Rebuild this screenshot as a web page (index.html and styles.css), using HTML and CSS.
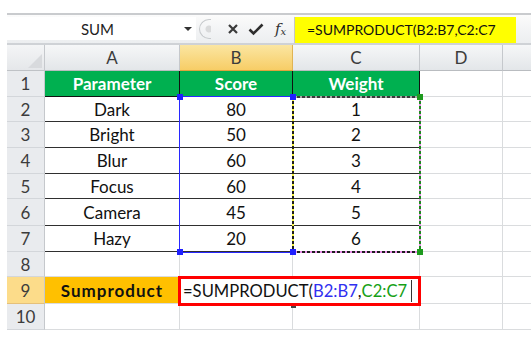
FILE: index.html
```html
<!DOCTYPE html>
<html>
<head>
<meta charset="utf-8">
<link rel="stylesheet" href="styles.css">
</head>
<body>
<div class="app">
  <div class="fbar">
    <div class="namebox"><span class="nm">SUM</span><span class="dd"></span></div>
    <div class="grip"></div>
    <div class="btns">
      <svg class="ico" width="14" height="14" viewBox="0 0 14 14"><path d="M3 3 L11 11 M11 3 L3 11" stroke="#3a3a3a" stroke-width="2.2" fill="none"/></svg>
      <svg class="ico" width="16" height="14" viewBox="0 0 16 14"><path d="M1.5 7.5 L5.5 11.5 L14.5 2.5" stroke="#2e2e2e" stroke-width="2.6" fill="none"/></svg>
      <span class="fx">f<sub>x</sub></span>
    </div>
    <div class="finput">=SUMPRODUCT(B2:B7,C2:C7</div>
  </div>
  <div class="sheet">
    <div class="corner"><svg width="20" height="18" viewBox="0 0 20 18"><path d="M18 2 L18 16 L4 16 Z" fill="#d8dadd"/></svg></div>
    <div class="ch">A</div><div class="ch sel">B</div><div class="ch">C</div><div class="ch">D</div><div class="ch last"></div>

    <div class="rh">1</div><div class="c hd tr">Parameter</div><div class="c hd tr">Score</div><div class="c hd tr">Weight</div><div class="c"></div><div class="c"></div>
    <div class="rh">2</div><div class="c tb">Dark</div><div class="c tb">80</div><div class="c tb">1</div><div class="c"></div><div class="c"></div>
    <div class="rh">3</div><div class="c tb">Bright</div><div class="c tb">50</div><div class="c tb">2</div><div class="c"></div><div class="c"></div>
    <div class="rh">4</div><div class="c tb">Blur</div><div class="c tb">60</div><div class="c tb">3</div><div class="c"></div><div class="c"></div>
    <div class="rh">5</div><div class="c tb">Focus</div><div class="c tb">60</div><div class="c tb">4</div><div class="c"></div><div class="c"></div>
    <div class="rh">6</div><div class="c tb">Camera</div><div class="c tb">45</div><div class="c tb">5</div><div class="c"></div><div class="c"></div>
    <div class="rh">7</div><div class="c tb">Hazy</div><div class="c tb">20</div><div class="c tb">6</div><div class="c"></div><div class="c"></div>
    <div class="rh">8</div><div class="c"></div><div class="c"></div><div class="c"></div><div class="c"></div><div class="c"></div>
    <div class="rh sel">9</div><div class="c orange">Sumproduct</div><div class="c"></div><div class="c"></div><div class="c"></div><div class="c"></div>
    <div class="rh">10</div><div class="c"></div><div class="c"></div><div class="c"></div><div class="c"></div><div class="c"></div>

    <div class="rng-b"></div>
    <div class="rng-c"></div>
    <span class="hdl blue h1"></span><span class="hdl blue h2"></span><span class="hdl blue h3"></span><span class="hdl blue h4"></span>
    <span class="hdl green h5"></span><span class="hdl green h6"></span>
    <div class="editor">=SUMPRODUCT(<span class="rb">B2:B7</span>,<span class="rc">C2:C7</span><span class="caret"></span></div>
    <span class="tick"></span>
  </div>
</div>
</body>
</html>
```
FILE: styles.css
```css
* { box-sizing: border-box; }
html, body { margin: 0; padding: 0; background: #fff; }
body { width: 531px; height: 337px; overflow: hidden; font-family: Lato, "Open Sans", sans-serif; }
.app { padding-top: 13px; padding-left: 7px; }

.fbar {
  display: flex;
  align-items: flex-start;
  height: 32px;
  border-top: 2px solid #c9cbce;
  border-bottom: 2px solid #cfd2d6;
  background: linear-gradient(#fbfbfb, #eceef0);
  padding-top: 2px;
}
.namebox {
  width: 189px;
  height: 23px;
  background: #fff;
  display: flex;
  align-items: center;
  position: relative;
}
.nm { flex: 1; text-align: center; font-size: 15px; color: #222; padding-left: 4px; }
.dd { width: 0; height: 0; border-left: 4px solid transparent; border-right: 4px solid transparent; border-top: 4px solid #333; margin-right: 4px; }
.grip {
  width: 12px; height: 20px; margin-left: 3px; margin-top: 2px;
  border: 1.5px solid #c7cacd; border-right: none; border-radius: 12px 0 0 12px;
  background: radial-gradient(circle at 9px 9px, #d9dadb 3px, transparent 4px);
}
.btns { display: flex; align-items: center; height: 24px; gap: 8px; margin-left: 15px; }
.fx { font-family: "DejaVu Serif", "Liberation Serif", serif; font-style: italic; font-size: 15px; color: #333; margin-left: 3px; width: 19px; }
.fx sub { font-size: 10px; vertical-align: -1px; }
.finput {
  width: 222px;
  height: 26px;
  background: #ffff00;
  border-left: 1px solid #c6c6c6;
  font-size: 14px;
  color: #111;
  padding-left: 12px;
  line-height: 26px;
  white-space: nowrap;
}

.sheet {
  position: relative;
  display: grid;
  grid-template-columns: 38px 135px 113px 127px 83px 35px;
  grid-template-rows: 26px 26px 25px 26px 26px 25px 27px 26px 25px 27px 26px;
}
.corner { background: linear-gradient(#f4f5f6, #e5e7ea); border-right: 1px solid #c5c8cc; border-bottom: 1px solid #bfc2c6; display: flex; align-items: flex-end; justify-content: flex-end; }
.ch {
  background: linear-gradient(#f6f7f8, #e3e6e9);
  border-right: 1px solid #c5c8cc;
  border-bottom: 1px solid #b9bcc0;
  display: flex; align-items: center; justify-content: center;
  font-size: 17px; color: #3c3c3c;
}
.ch.sel { background: linear-gradient(#fbe6a2, #f7cd66); border-right-color: #e0b454; border-bottom-color: #e0a33c; }
.ch.last { border-right: none; }
.rh {
  background: #e9ebee;
  border-right: 1px solid #c5c8cc;
  border-bottom: 1px solid #d3d6da;
  display: flex; align-items: center; justify-content: center;
  font-size: 17px; color: #3c3c3c;
}
.rh.sel { background: #fcdc8a; border-bottom-color: #e5c07a; }
.c {
  border-right: 1px solid #dadcde;
  border-bottom: 1px solid #dadcde;
  display: flex; align-items: center; justify-content: center;
  font-size: 17px; color: #111;
  white-space: nowrap;
}
.c.hd { background: #00b050; color: #fff; font-weight: bold; border-bottom-color: #111; }
.c.tr { border-right-color: #111; }
.c.tb { border-bottom-color: #2f2f2f; }
.c.orange { background: #ffc000; font-weight: bold; color: #111; letter-spacing: 1px; }

.rng-b { position: absolute; left: 172px; top: 51px; width: 115px; height: 157px; border: 1px solid #2828ff; }
.rng-c {
  position: absolute; left: 285px; top: 51px; width: 129px; height: 157px;
  background:
    repeating-linear-gradient(90deg, #3a3a3a 0 3px, #a8a8a8 3px 5px) top / 100% 2px no-repeat,
    repeating-linear-gradient(90deg, #1e1e1e 0 3px, #e98be9 3px 5px) bottom / 100% 2px no-repeat,
    repeating-linear-gradient(180deg, #1e1e1e 0 3px, #f5f040 3px 5px) left / 2px 100% no-repeat,
    repeating-linear-gradient(180deg, #1c8a1c 0 3px, #e98be9 3px 5px) right / 2px 100% no-repeat;
}
.hdl { position: absolute; width: 6px; height: 6px; }
.hdl.blue { background: #2020ff; }
.hdl.green { background: #1e9a1e; }
.h1 { left: 170px; top: 49px; }
.h2 { left: 170px; top: 204px; }
.h3 { left: 283px; top: 49px; background: #3a55ff; }
.h4 { left: 283px; top: 204px; }
.h5 { left: 410px; top: 49px; }
.h6 { left: 410px; top: 204px; }

.editor {
  position: absolute; left: 171px; top: 231px; width: 243px; height: 30px;
  border: 3px solid #ff0000; background: #fff;
  font-size: 16.6px; color: #111; padding-left: 2px;
  display: flex; align-items: center; white-space: nowrap;
}
.rb { color: #3030f0; }
.rc { color: #16a016; }
.caret { display: inline-block; width: 1px; height: 22px; background: #333; margin-left: 4px; }
.tick { position: absolute; left: 284px; top: 261px; width: 5px; height: 2px; background: #444; }
```
